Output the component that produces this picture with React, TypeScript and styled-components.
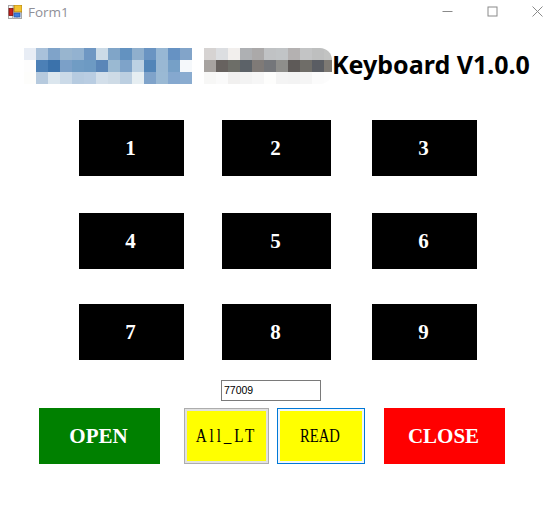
import React from "react";
import styled, { createGlobalStyle } from "styled-components";

const BLUE_CELLS = [
  ["#e8edf5", "#a9c1da", "#7fa3c9", "#98b5cf", "#93b2d0", "#6f97c3", "#ccdbe7", "#80a5c8", "#6392c0", "#8fafcd", "#6a94c2", "#97b7d4", "#6692c3", "#82a4c9"],
  ["#fdfdfd", "#4c80b6", "#3b72ab", "#7ba0c8", "#709cc4", "#6d9ac3", "#5a86b8", "#9ab9d2", "#7ea3c9", "#bcd1e3", "#5285b8", "#99b8d3", "#76a0c7", "#f5f8fb"],
  ["#fdfdfb", "#b6cade", "#dbe6ee", "#cbdae8", "#b6cbe0", "#b9cde2", "#d3dfea", "#cedbe6", "#bccfe1", "#e6eef2", "#7fa3ca", "#9ab9d4", "#85a8cf", "#8aacd0"],
];

const GREY_CELLS = [
  ["#d6d3d2", "#dcdee1", "#f2efed", "#aeb0b3", "#aba9a9", "#c0c2c4", "#c1c4c6", "#b4b1b1", "#c3c4c5", "#bebfbf", "#c2c3c2"],
  ["#a7a3a0", "#67625f", "#6d6e68", "#5c6268", "#7f7a77", "#74767a", "#8e8e8b", "#5e5a58", "#6f6d68", "#5a5d63", "#7d7973"],
  ["#f7f7f6", "#fafafa", "#f1f0ef", "#f3f3f3", "#f6f6f6", "#fdfdfc", "#f4f4f4", "#f3f3f3", "#f5f5f5", "#fbfbfb", "#fcfcfc"],
];

const KEYS = ["1", "2", "3", "4", "5", "6", "7", "8", "9"];

const Mosaic = ({ cells, width, radius, id }: { cells: string[][]; width: number; radius: number; id: string }) => (
  <svg width={width} height={36} viewBox={`0 0 ${width} 36`}>
    <clipPath id={id}>
      <rect x={-20} width={width + 20} height={36} rx={radius} />
    </clipPath>
    <g clipPath={`url(#${id})`}>
      {cells.map((row, y) =>
        row.map((color, x) => (
          <rect key={`${x}-${y}`} x={x * 12} y={y * 12} width={12} height={12} fill={color} />
        ))
      )}
    </g>
  </svg>
);

const FormIcon = () => (
  <svg width={14} height={14} viewBox="0 0 14 14">
    <rect x={0.5} y={0.5} width={13} height={13} fill="#f4f4f4" stroke="#a8a8a8" />
    <path d="M0.5 5h5M5 0.5v5M0.5 10h4M4.5 9v4.5M9 9v4.5" stroke="#b4b4b4" fill="none" />
    <rect x={6} y={0} width={8} height={7} fill="#f2c230" stroke="#a87a10" strokeWidth={0.8} />
    <rect x={1} y={3.5} width={4} height={7} fill="#c8201c" stroke="#7a1210" strokeWidth={0.8} />
    <rect x={6} y={8} width={6} height={4} fill="#3f7fe0" stroke="#2a58a8" strokeWidth={0.8} />
  </svg>
);

export default function App() {
  return (
    <Window>
      <GlobalStyle />
      <TitleBar>
        <FormIcon />
        <Caption>Form1</Caption>
        <WindowControls>
          <ControlButton>
            <svg width={11} height={11} viewBox="0 0 11 11">
              <path d="M0.5 5.5h10" stroke="#8a8a8a" fill="none" />
            </svg>
          </ControlButton>
          <ControlButton>
            <svg width={11} height={11} viewBox="0 0 11 11">
              <rect x={1} y={1} width={9} height={9} stroke="#8a8a8a" fill="none" />
            </svg>
          </ControlButton>
          <ControlButton>
            <svg width={11} height={11} viewBox="0 0 11 11">
              <path d="M0.5 0.5l10 10M10.5 0.5l-10 10" stroke="#8a8a8a" fill="none" />
            </svg>
          </ControlButton>
        </WindowControls>
      </TitleBar>
      <Header>
        <Mosaic cells={BLUE_CELLS} width={168} radius={0} id="clip-blue" />
        <Mosaic cells={GREY_CELLS} width={128} radius={12} id="clip-grey" />
        <Title>Keyboard V1.0.0</Title>
      </Header>
      <Keypad>
        {KEYS.map((key, i) => (
          <Key key={key} $wide={i % 3 === 1}>
            {key}
          </Key>
        ))}
      </Keypad>
      <ValueInput defaultValue="77009" />
      <ActionRow>
        <ActionButton $bg="#008000">OPEN</ActionButton>
        <YellowButton $border="#adadad" $gap="#e1e1e1" $width={85}>
          <NarrowLabel $scale={0.8} $spacing={3.6} $shift={0}>
            All_LT
          </NarrowLabel>
        </YellowButton>
        <YellowButton $border="#0078d7" $gap="#f0f6fb" $width={88}>
          <NarrowLabel $scale={0.77} $spacing={0} $shift={-1}>
            READ
          </NarrowLabel>
        </YellowButton>
        <ActionButton $bg="#ff0000">CLOSE</ActionButton>
      </ActionRow>
    </Window>
  );
}

const GlobalStyle = createGlobalStyle`
  html, body {
    margin: 0;
    padding: 0;
    background: #ffffff;
  }
`;

const Window = styled.div`
  width: 555px;
  height: 513px;
  overflow: hidden;
  background: #ffffff;
  display: flex;
  flex-direction: column;
  align-items: flex-start;
`;

const TitleBar = styled.div`
  width: 100%;
  height: 23px;
  padding-left: 8px;
  box-sizing: border-box;
  display: flex;
  align-items: center;
  flex-shrink: 0;
`;

const Caption = styled.span`
  margin-left: 6px;
  font-family: "Open Sans", sans-serif;
  font-size: 13.5px;
  color: #8f8f98;
`;

const WindowControls = styled.div`
  margin-left: auto;
  margin-right: -5px;
  display: flex;
`;

const ControlButton = styled.div`
  width: 45px;
  height: 23px;
  display: flex;
  align-items: center;
  justify-content: center;
`;

const Header = styled.div`
  margin: 25px 0 0 24px;
  height: 36px;
  display: flex;
  align-items: center;
  gap: 12px;
`;

const Title = styled.h1`
  margin: 0 0 0 -12px;
  padding-bottom: 4px;
  font-family: "Noto Sans", sans-serif;
  font-size: 25px;
  line-height: 36px;
  font-weight: 700;
  white-space: nowrap;
  color: #000000;
`;

const Keypad = styled.div`
  margin: 36px 0 0 79px;
  display: grid;
  grid-template-columns: 143px 150px 105px;
  grid-template-rows: 93px 91px 56px;
`;

const Key = styled.div<{ $wide: boolean }>`
  width: ${(p) => (p.$wide ? 109 : 105)}px;
  height: 56px;
  padding-right: 2px;
  box-sizing: border-box;
  background: #000000;
  color: #ffffff;
  display: flex;
  align-items: center;
  justify-content: center;
  font-family: "Liberation Serif", serif;
  font-size: 21px;
  font-weight: 700;
`;

const ValueInput = styled.input`
  margin: 20px 0 0 221px;
  width: 100px;
  height: 21px;
  box-sizing: border-box;
  padding: 0 2px 2px;
  border: 1px solid #7a7a7a;
  border-radius: 0;
  outline: none;
  font-family: "Liberation Sans", sans-serif;
  font-size: 10.5px;
  color: #000000;
`;

const ActionRow = styled.div`
  margin: 7px 0 0 39px;
  display: grid;
  grid-template-columns: 145px 93px 107px 121px;
`;

const ActionButton = styled.button<{ $bg: string }>`
  width: 121px;
  height: 56px;
  padding: 0 2px 0 0;
  border: none;
  background: ${(p) => p.$bg};
  color: #ffffff;
  font-family: "Liberation Serif", serif;
  font-size: 21px;
  font-weight: 700;
`;

const YellowButton = styled.button<{ $border: string; $gap: string; $width: number }>`
  width: ${(p) => p.$width}px;
  height: 56px;
  padding: 0;
  box-sizing: border-box;
  border: 1px solid ${(p) => p.$border};
  outline: 2px solid ${(p) => p.$gap};
  outline-offset: -3px;
  background: #ffff00;
  color: #000000;
  font-family: "Liberation Serif", serif;
  font-size: 19px;
`;

const NarrowLabel = styled.span<{ $scale: number; $spacing: number; $shift: number }>`
  display: inline-block;
  transform: translateX(${(p) => p.$shift}px) scaleX(${(p) => p.$scale});
  letter-spacing: ${(p) => p.$spacing}px;
  white-space: nowrap;
`;
